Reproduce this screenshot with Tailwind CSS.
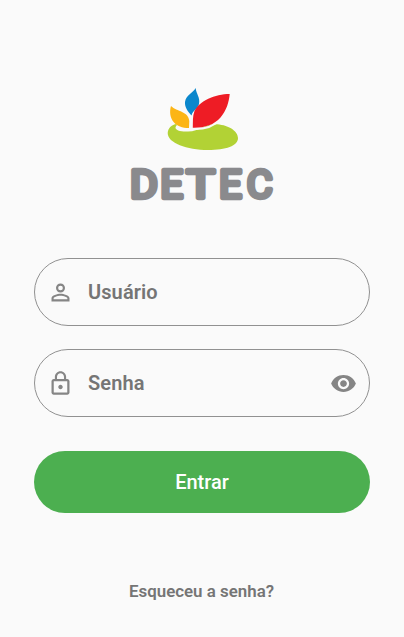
<!DOCTYPE html>
<html lang="pt-BR">
<head>
<meta charset="utf-8">
<meta name="viewport" content="width=device-width, initial-scale=1">
<title>DETEC</title>
<script src="https://cdn.jsdelivr.net/npm/@tailwindcss/browser@4"></script>
</head>
<body class="bg-[#fafafa] font-['Roboto',sans-serif] text-[#757575]">
<main class="flex h-[637px] w-[404px] flex-col items-center overflow-hidden pt-20">
  <svg class="h-[130px] w-[164px] shrink-0" viewBox="120 80 164 130" role="img" aria-label="DETEC">
    <path fill="#b2d235" d="M176.500 124C172 124.500 168 128 167.700 133C167.500 143 187 150 208 150C226 150 238 146 238 138C238 130 226 123.500 213 124.200C204 125 200 131 188 131.500C181 132 175 130 175.500 127.500C175.700 126 177.500 125.500 176.500 124Z"/>
    <path fill="#fcb515" d="M171 106C177 112 188.500 111 189.300 121L189 128C182 128 177 126 174 122.500C170 118 169.300 111.500 171 106Z"/>
    <path fill="#0b87cc" d="M195.700 88C196 94 200.500 97 199 104C198 108.500 193 110 191.500 115.500C188 112 184.500 107 185 102C186 95 193 93 195.700 88Z"/>
    <path fill="none" stroke="#fafafa" stroke-width="2" d="M192 129C204 129.500 214 126.500 221 119"/>
    <path fill="#ee1c25" d="M229.700 94C215 94 199 101 194.500 111C192.500 116 193 122 192.800 127.700C204 128 214 125 220.500 117.500C226.500 110.500 229 102 229.700 94Z"/>
    <g fill="#8a8a8d" stroke="#8a8a8d" stroke-width="4.400" stroke-linejoin="round" font-family="Roboto" font-weight="400" font-size="39">
      <text transform="translate(130 198.400) scale(1.090 1)">D</text>
      <text transform="translate(160.300 198.400) scale(1.030 1)">E</text>
      <text transform="translate(186.300 198.400) scale(1.230 1)">T</text>
      <text transform="translate(219 198.400) scale(1.030 1)">E</text>
      <text transform="translate(246.700 198.400) scale(1.020 1)">C</text>
    </g>
  </svg>

  <form class="mt-12 flex w-[336px] flex-col">
    <div class="flex h-[68px] items-center rounded-full border border-[#919191] pl-[12px]">
      <svg class="size-[27px]" viewBox="0 0 24 24" fill="#858585"><path d="M12 5.900a2.100 2.100 0 1 1 0 4.200 2.100 2.100 0 0 1 0-4.200m0 9c2.970 0 6.100 1.460 6.100 2.100v1.100H5.900V17c0-.64 3.130-2.100 6.100-2.100M12 4C9.790 4 8 5.790 8 8s1.790 4 4 4 4-1.790 4-4-1.790-4-4-4zm0 9c-2.670 0-8 1.340-8 4v3h16v-3c0-2.660-5.330-4-8-4z"/></svg>
      <span class="ml-[14px] text-[20px] font-semibold tracking-[0.1px]">Usuário</span>
    </div>
    <div class="mt-[23px] flex h-[68px] items-center rounded-full border border-[#919191] pr-[12px] pl-[12px]">
      <svg class="size-[27px]" viewBox="0 0 24 24" fill="#858585"><path d="M18 8h-1V6c0-2.760-2.240-5-5-5S7 3.240 7 6v2H6c-1.100 0-2 .9-2 2v10c0 1.100.9 2 2 2h12c1.100 0 2-.9 2-2V10c0-1.100-.9-2-2-2zM8.900 6c0-1.710 1.390-3.100 3.100-3.100s3.100 1.390 3.100 3.100v2H8.900V6zM18 20H6V10h12v10zm-6-3c1.100 0 2-.9 2-2s-.9-2-2-2-2 .9-2 2 .9 2 2 2z"/></svg>
      <span class="ml-[14px] text-[20px] font-semibold tracking-[0.1px]">Senha</span>
      <svg class="ml-auto size-[27px]" viewBox="0 0 24 24" fill="#858585"><path d="M12 4.500C7 4.500 2.730 7.610 1 12c1.730 4.390 6 7.500 11 7.500s9.270-3.110 11-7.500c-1.730-4.390-6-7.500-11-7.500zM12 17c-2.760 0-5-2.240-5-5s2.240-5 5-5 5 2.240 5 5-2.240 5-5 5zm0-8c-1.660 0-3 1.340-3 3s1.340 3 3 3 3-1.340 3-3-1.340-3-3-3z"/></svg>
    </div>
    <button type="button" class="mt-[34px] h-[62px] rounded-full bg-[#4caf50] text-[20px] font-medium text-white">Entrar</button>
  </form>
  <a class="mt-[66px] pr-px text-[16.900px] leading-6 font-semibold">Esqueceu a senha?</a>
</main>
</body>
</html>
